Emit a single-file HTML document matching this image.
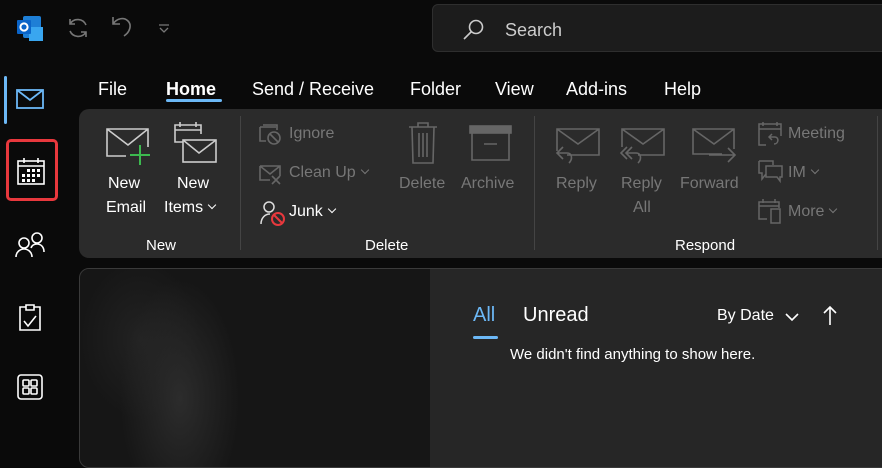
<!DOCTYPE html>
<html><head><meta charset="utf-8"><style>
*{margin:0;padding:0;box-sizing:border-box}
body{width:882px;height:449px;background:#0a0a0a;font-family:"Segoe UI","Liberation Sans",sans-serif;color:#fff;position:relative;overflow:hidden}
.a{position:absolute}
.t{position:absolute;font-size:18px;color:#fff;white-space:nowrap;transform:translateY(2px)}
.g{color:#777}
.s{font-size:16px}
svg{position:absolute;overflow:visible}
.cv{display:inline-block;width:6px;height:6px;border-right:1.5px solid currentColor;border-bottom:1.5px solid currentColor;transform:rotate(45deg);margin-left:6px;vertical-align:4px}
</style></head><body>
<svg style="left:17px;top:15px" width="26" height="26" viewBox="0 0 26 26"><rect x="6" y="1" width="18" height="22" fill="#1e7fd6" rx="2"/><rect x="12" y="12" width="14" height="14" fill="#39a6f0"/><rect x="0" y="5" width="14" height="14" fill="#0a64c8" rx="1"/><circle cx="7" cy="12" r="3.6" fill="none" stroke="#fff" stroke-width="2"/></svg>
<svg style="left:66px;top:16px" width="24" height="24" viewBox="0 0 24 24" fill="none" stroke="#777" stroke-width="1.6"><path d="M20 9A9 9 0 0 0 4 8M4 15a9 9 0 0 0 16 1M4 3v5h5M20 21v-5h-5"/></svg>
<svg style="left:110px;top:14px" width="24" height="26" viewBox="0 0 24 26" fill="none" stroke="#777" stroke-width="1.6"><path d="M3 3v7h7M3 10C7 4 14 3 18 7s2 11-4 15"/></svg>
<svg style="left:158px;top:24px" width="12" height="10" viewBox="0 0 12 10" fill="none" stroke="#777" stroke-width="1.3"><path d="M1 1h10M2 4l4 4 4-4"/></svg>
<div class="a" style="left:432px;top:4px;width:460px;height:48px;background:#1c1c1c;border:1px solid #2e2e2e;border-radius:6px"></div>
<svg style="left:463px;top:19px" width="22" height="22" viewBox="0 0 22 22" fill="none" stroke="#ccc" stroke-width="1.6"><circle cx="13" cy="8" r="6.5"/><path d="M8.5 12.5L1 20"/></svg>
<div class="t" style="left:505px;top:18px;color:#ccc">Search</div>
<div class="a" style="left:4px;top:76px;width:3px;height:48px;background:#6cb8f6;border-radius:2px"></div>
<svg style="left:16px;top:89px" width="28" height="20" viewBox="0 0 28 20" fill="none" stroke="#6cb8f6" stroke-width="1.8"><rect x="1" y="1" width="26" height="18"/><path d="M1 1l13 10 13-10"/></svg>
<div class="a" style="left:6px;top:139px;width:52px;height:62px;border:3px solid #e8383d;border-radius:5px"></div>
<svg style="left:17px;top:158px" width="28" height="28" viewBox="0 0 28 28" fill="none" stroke="#fff" stroke-width="1.6"><rect x="1" y="3" width="26" height="23"/><path d="M1 8h26M7 0v5M21 0v5" /><g fill="#fff" stroke="none"><rect x="10" y="11" width="3" height="3"/><rect x="15" y="11" width="3" height="3"/><rect x="20" y="11" width="3" height="3"/><rect x="5" y="16" width="3" height="3"/><rect x="10" y="16" width="3" height="3"/><rect x="15" y="16" width="3" height="3"/><rect x="20" y="16" width="3" height="3"/><rect x="5" y="21" width="3" height="3"/><rect x="10" y="21" width="3" height="3"/><rect x="15" y="21" width="3" height="3"/></g></svg>
<svg style="left:15px;top:230px" width="30" height="28" viewBox="0 0 30 28" fill="none" stroke="#fff" stroke-width="1.6"><circle cx="9" cy="13" r="5"/><path d="M1 27c0-5 4-8 8-8s8 3 8 8"/><circle cx="22" cy="8" r="5"/><path d="M16 18c1-3 3-4 6-4 4 0 7 3 7 8"/></svg>
<svg style="left:19px;top:303px" width="22" height="28" viewBox="0 0 22 28" fill="none" stroke="#fff" stroke-width="1.6"><path d="M7 4H1v23h20V4h-6M7 2h8v5H7zM5 18l4 5 8-10"/></svg>
<svg style="left:17px;top:374px" width="26" height="26" viewBox="0 0 26 26" fill="none" stroke="#fff" stroke-width="1.6"><rect x="1" y="1" width="24" height="24" rx="3"/><rect x="6" y="6" width="6" height="6" rx="1"/><rect x="14" y="6" width="6" height="6" rx="1"/><rect x="6" y="14" width="6" height="6" rx="1"/><rect x="14" y="14" width="6" height="6" rx="1"/></svg>
<div class="t" style="left:98px;top:77px">File</div>
<div class="t" style="left:166px;top:77px;font-weight:bold">Home</div>
<div class="a" style="left:166px;top:99px;width:56px;height:3px;background:#6cb8f6;border-radius:2px"></div>
<div class="t" style="left:252px;top:77px">Send / Receive</div>
<div class="t" style="left:410px;top:77px">Folder</div>
<div class="t" style="left:495px;top:77px">View</div>
<div class="t" style="left:566px;top:77px">Add-ins</div>
<div class="t" style="left:664px;top:77px">Help</div>
<div class="a" style="left:79px;top:109px;width:820px;height:149px;background:#2b2b2b;border-radius:10px"></div>
<div class="a" style="left:240px;top:116px;width:1px;height:134px;background:#444"></div>
<div class="a" style="left:534px;top:116px;width:1px;height:134px;background:#444"></div>
<div class="a" style="left:877px;top:116px;width:1px;height:134px;background:#444"></div>
<svg style="left:106px;top:128px" width="46" height="36" viewBox="0 0 46 36" fill="none" stroke="#ccc" stroke-width="1.6"><path d="M20 28H1V1h41v18M1 1l21 16 20-16"/><path d="M34 17v20M24 27h20" stroke="#3cb94f" stroke-width="2"/></svg>
<svg style="left:174px;top:122px" width="44" height="42" viewBox="0 0 44 42" fill="none" stroke="#ccc" stroke-width="1.6"><path d="M9 20H1V3h26v9M1 8h26M6 0v5M22 0v5"/><rect x="9" y="18" width="33" height="22"/><path d="M9 18l16 13 17-13"/></svg>
<div class="t s" style="left:108px;top:173px">New</div><div class="t s" style="left:106px;top:197px">Email</div>
<div class="t s" style="left:177px;top:173px">New</div><div class="t s" style="left:164px;top:197px">Items<span class="cv"></span></div>
<div class="t" style="left:146px;top:235px;font-size:15px">New</div>
<svg style="left:259px;top:124px" width="24" height="22" viewBox="0 0 24 22" fill="none" stroke="#666" stroke-width="1.6"><path d="M1 3h16M1 3v14h6M4 1h14v5"/><circle cx="15" cy="14" r="6"/><path d="M11 10l8 8"/></svg>
<div class="t s g" style="left:289px;top:123px">Ignore</div>
<svg style="left:259px;top:163px" width="24" height="22" viewBox="0 0 24 22" fill="none" stroke="#666" stroke-width="1.6"><path d="M1 3h20v10M1 3v14h10M1 3l10 8 10-8M13 13l8 8M21 13l-8 8"/></svg>
<div class="t s g" style="left:289px;top:162px">Clean Up<span class="cv"></span></div>
<svg style="left:260px;top:200px" width="26" height="26" viewBox="0 0 26 26" fill="none" stroke="#ddd" stroke-width="1.5"><circle cx="9" cy="7" r="5"/><path d="M1 24c0-6 4-10 9-10"/><circle cx="18" cy="19" r="6" stroke="#e8383d" stroke-width="2"/><path d="M14 15l8 8" stroke="#e8383d" stroke-width="2"/></svg>
<div class="t s" style="left:289px;top:201px">Junk<span class="cv"></span></div>
<svg style="left:408px;top:122px" width="30" height="42" viewBox="0 0 30 42" fill="none" stroke="#666" stroke-width="1.6"><path d="M1 5h28M10 5V1h10v4M4 5l1 36h20l1-36M11 11v24M15 11v24M19 11v24"/></svg>
<svg style="left:469px;top:125px" width="44" height="36" viewBox="0 0 44 36" fill="none" stroke="#666" stroke-width="1.6"><rect x="1" y="1" width="41" height="7" fill="#666"/><path d="M3 8v27h37V8M15 19h13"/></svg>
<div class="t s g" style="left:399px;top:173px">Delete</div>
<div class="t s g" style="left:461px;top:173px">Archive</div>
<div class="t" style="left:365px;top:235px;font-size:15px">Delete</div>
<svg style="left:555px;top:128px" width="46" height="40" viewBox="0 0 46 40" fill="none" stroke="#666" stroke-width="1.6"><path d="M12 27H44V1H2v22M2 1l21 15 21-15M8 19l-6 6 6 6M2 25h10c5 0 6 6 2 10"/></svg>
<svg style="left:620px;top:128px" width="46" height="40" viewBox="0 0 46 40" fill="none" stroke="#666" stroke-width="1.6"><path d="M18 27H44V1H2v18M2 1l21 15 21-15M12 19l-6 6 6 6M7 19l-6 6 6 6M6 25h10c5 0 6 6 2 10"/></svg>
<div class="t s g" style="left:556px;top:173px">Reply</div>
<div class="t s g" style="left:621px;top:173px">Reply</div><div class="t s g" style="left:633px;top:197px">All</div>
<svg style="left:692px;top:128px" width="46" height="40" viewBox="0 0 46 40" fill="none" stroke="#666" stroke-width="1.6"><path d="M30 26H1V1h41v20M1 1l21 15 20-15M17 27h25M36 20l7 7-7 7"/></svg>
<div class="t s g" style="left:680px;top:173px">Forward</div>
<svg style="left:758px;top:122px" width="24" height="24" viewBox="0 0 24 24" fill="none" stroke="#666" stroke-width="1.5"><path d="M8 23H1V2h22v12M1 7h22M5 0v4M19 0v4M14 12l-3 3 3 3M11 15h6c4 0 4 7-1 7"/></svg>
<div class="t s g" style="left:788px;top:123px">Meeting</div>
<svg style="left:758px;top:160px" width="26" height="24" viewBox="0 0 26 24" fill="none" stroke="#666" stroke-width="1.5"><path d="M1 1h14v4M1 1v12h3v6l4-5M8 6h16v11h-2v4l-3-4H8z"/></svg>
<div class="t s g" style="left:788px;top:162px">IM<span class="cv"></span></div>
<svg style="left:758px;top:199px" width="24" height="26" viewBox="0 0 24 26" fill="none" stroke="#666" stroke-width="1.5"><path d="M9 20H1V3h20v6M1 7h20M5 0v4M17 0v4"/><rect x="13" y="10" width="9" height="14"/></svg>
<div class="t s g" style="left:788px;top:201px">More<span class="cv"></span></div>
<div class="t" style="left:675px;top:235px;font-size:15px">Respond</div>
<div class="a" style="left:79px;top:268px;width:820px;height:200px;border:1px solid #3a3a3a;border-radius:10px;background:#262626;overflow:hidden">
<div class="a" style="left:0;top:0;width:350px;height:200px;background:radial-gradient(ellipse 60px 120px at 100px 130px,#2c2c2c,transparent),radial-gradient(ellipse 60px 80px at 60px 70px,#222,transparent),#161616"></div>
</div>
<div class="t" style="left:473px;top:302px;font-size:20px;color:#6cb8f6">All</div>
<div class="a" style="left:473px;top:336px;width:25px;height:3px;background:#6cb8f6;border-radius:2px"></div>
<div class="t" style="left:523px;top:302px;font-size:20px">Unread</div>
<div class="t s" style="left:717px;top:305px">By Date</div>
<svg style="left:785px;top:313px" width="14" height="8" viewBox="0 0 14 8" fill="none" stroke="#fff" stroke-width="1.6"><path d="M1 1l6 6 6-6"/></svg>
<svg style="left:823px;top:306px" width="14" height="20" viewBox="0 0 14 20" fill="none" stroke="#fff" stroke-width="1.6"><path d="M7 19V1M1 7l6-6 6 6"/></svg>
<div class="t" style="left:510px;top:344px;font-size:15px">We didn't find anything to show here.</div>
</body></html>
